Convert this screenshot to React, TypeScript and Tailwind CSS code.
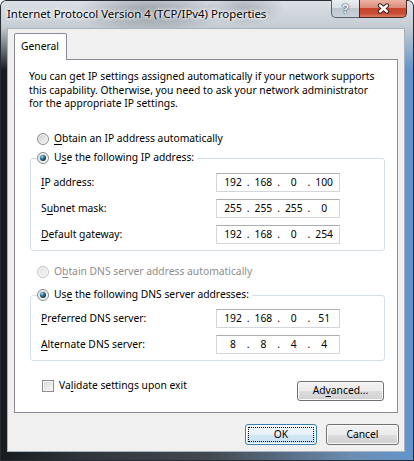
import React from 'react'

function Acc({ children }: { children: React.ReactNode }) {
  return <span className="underline decoration-1 underline-offset-[1.5px]">{children}</span>
}

function Radio({ checked = false, disabled = false }: { checked?: boolean; disabled?: boolean }) {
  const id = React.useId().replace(/:/g, '')
  return (
    <svg width="12" height="12" viewBox="0 0 12 12" className="shrink-0">
      <defs>
        <linearGradient id={`rb${id}`} x1="0" y1="0" x2="1" y2="1">
          <stop offset="0" stopColor={disabled ? '#e2e2e2' : '#c9c9c9'} />
          <stop offset="1" stopColor={disabled ? '#f4f4f4' : '#fbfbfb'} />
        </linearGradient>
        <radialGradient id={`rd${id}`} cx="0.35" cy="0.3" r="0.75">
          <stop offset="0" stopColor="#a9e4f7" />
          <stop offset="0.45" stopColor="#2f6f92" />
          <stop offset="1" stopColor="#10344a" />
        </radialGradient>
      </defs>
      <circle cx="6" cy="6" r="5.5" fill={`url(#rb${id})`} stroke={disabled ? '#c4c4c4' : '#8c8c8c'} />
      <circle cx="6" cy="6" r="4.3" fill="none" stroke={disabled ? '#f7f7f7' : '#f2f2f2'} strokeWidth="0.8" />
      {checked && <circle cx="6" cy="6" r="3" fill={`url(#rd${id})`} />}
    </svg>
  )
}

function IpBox({ parts }: { parts: string[] }) {
  return (
    <div className="flex h-[19px] w-[124px] items-center border border-[#d3d7dd] border-t-[#abadb3] bg-white pl-[4px]">
      {parts.map((p, i) => (
        <React.Fragment key={i}>
          {i > 0 && <span className="w-[6.4px] text-center">.</span>}
          <span className="w-[24px] text-center">{p}</span>
        </React.Fragment>
      ))}
    </div>
  )
}

function Field({ label, parts }: { label: React.ReactNode; parts: string[] }) {
  return (
    <div className="grid h-[19px] grid-cols-[175px_124px] items-center pl-[4px]">
      <span>{label}</span>
      <IpBox parts={parts} />
    </div>
  )
}

function Button({
  children,
  primary = false,
  className = '',
}: {
  children: React.ReactNode
  primary?: boolean
  className?: string
}) {
  return (
    <div
      className={`flex rounded-[3px] border p-[2px] shadow-[inset_0_0_0_1px_#fbfbfb] ${
        primary
          ? 'border-[#3c7fb1] bg-[linear-gradient(180deg,#f1f8fc_0%,#e6f2f9_50%,#d3e8f4_50%,#c6e0ef_100%)]'
          : 'border-[#707070] bg-[linear-gradient(180deg,#f2f2f2_0%,#ebebeb_50%,#dddddd_50%,#cfcfcf_100%)]'
      } ${className}`}
    >
      <div
        className={`flex flex-1 items-center justify-center border ${
          primary ? 'border-dotted border-black' : 'border-transparent'
        }`}
      >
        {children}
      </div>
    </div>
  )
}

export default function App() {
  return (
    <div className="flex h-[461px] w-[414px] flex-col overflow-hidden rounded-t-[6px] bg-[radial-gradient(ellipse_75px_22px_at_150px_12px,rgba(86,94,102,0.5),transparent),radial-gradient(ellipse_40px_18px_at_245px_8px,rgba(96,104,112,0.35),transparent),linear-gradient(180deg,#dbe1e6_0px,#c5ccd3_27px,rgba(197,204,211,0)_70px),linear-gradient(90deg,#171b1f_0%,#2f353b_20%,#41484f_50%,#6c8db2_85%,#6295ce_100%)] font-['Noto_Sans',sans-serif] text-[10.3px] text-black shadow-[inset_0_0_0_1px_#262c32]">
      {/* title bar */}
      <div className="flex h-[28px] shrink-0 items-start">
        <span className="mt-[6px] pl-[7px] text-[11.4px] leading-[16px] [text-shadow:0_0_5px_#fff,0_0_5px_#fff,0_0_3px_#fff]">
          Internet Protocol Version 4 (TCP/IPv4) Properties
        </span>
        <div className="ml-auto mr-[7px] flex h-[18px]">
          <div className="flex w-[28px] items-center justify-center rounded-bl-[5px] border border-t-0 border-r-0 border-[#59616a] bg-[linear-gradient(180deg,#e9eef2_0%,#d8dfe5_45%,#bdc7d0_50%,#c9d2da_100%)] font-['Liberation_Sans',sans-serif] text-[12px] font-bold text-[#f5f7f9] [text-shadow:0_0_1px_#3a4148,0_0_2px_#3a4148]">
            ?
          </div>
          <div className="flex w-[48px] items-center justify-center rounded-br-[5px] border border-t-0 border-[#4a2a23] bg-[linear-gradient(180deg,#ebb3a5_0%,#dd8b78_45%,#c8452c_50%,#c84b33_78%,#dc7c63_100%)]">
            <svg width="13" height="11" viewBox="0 0 13 11">
              <path d="M3 2.5 L10 8.5 M10 2.5 L3 8.5" stroke="#3a211b" strokeWidth="4.4" strokeLinecap="round" />
              <path d="M3 2.5 L10 8.5 M10 2.5 L3 8.5" stroke="#ffffff" strokeWidth="2.4" strokeLinecap="round" />
            </svg>
          </div>
        </div>
      </div>

      {/* client area */}
      <div className="ml-[7px] mr-[9px] flex h-[424px] shrink-0 flex-col border border-[#aab3bc] bg-[#f0f0f0]">
        {/* tab strip */}
        <div className="flex pl-[6px] pt-[4px]">
          <div className="relative z-10 -mb-px flex h-[27px] w-[53px] items-center rounded-t-[2px] border border-b-0 border-[#898c95] bg-white pl-[6px]">
            General
          </div>
        </div>

        {/* tab page */}
        <div className="mx-[6px] flex flex-col border border-[#898c95] bg-white pb-[11px] pl-[15px] pr-[12px] pt-[10px]">
          <p className="-ml-px leading-[13.5px]">
            You can get IP settings assigned automatically if your network supports
            <br />
            this capability. Otherwise, you need to ask your network administrator
            <br />
            for the appropriate IP settings.
          </p>

          <div className="mt-[18.5px] flex h-[19px] items-center gap-[5px] pl-[7px]">
            <Radio />
            <span>
              <Acc>O</Acc>btain an IP address automatically
            </span>
          </div>

          <fieldset className="rounded-[3px] border border-[#d5dfe5] px-[6px] pb-[6px]">
            <legend>
              <span className="flex h-[20px] items-center gap-[5px] pr-[3px]">
                <Radio checked />
                <span>
                  U<Acc>s</Acc>e the following IP address:
                </span>
              </span>
            </legend>
            <div className="mt-[5px] flex flex-col gap-[7px]">
              <Field label={<><Acc>I</Acc>P address:</>} parts={['192', '168', '0', '100']} />
              <Field label={<>S<Acc>u</Acc>bnet mask:</>} parts={['255', '255', '255', '0']} />
              <Field label={<><Acc>D</Acc>efault gateway:</>} parts={['192', '168', '0', '254']} />
            </div>
          </fieldset>

          <div className="mt-[11px] flex h-[20px] items-center gap-[5px] pl-[7px] text-[#8d8d8d]">
            <Radio disabled />
            <span>
              O<Acc>b</Acc>tain DNS server address automatically
            </span>
          </div>

          <fieldset className="mt-[3px] rounded-[3px] border border-[#d5dfe5] px-[6px] pb-[6px]">
            <legend>
              <span className="flex h-[20px] items-center gap-[5px] pr-[3px]">
                <Radio checked />
                <span>
                  Us<Acc>e</Acc> the following DNS server addresses:
                </span>
              </span>
            </legend>
            <div className="mt-[4px] flex flex-col gap-[7px]">
              <Field label={<><Acc>P</Acc>referred DNS server:</>} parts={['192', '168', '0', '51']} />
              <Field label={<><Acc>A</Acc>lternate DNS server:</>} parts={['8', '8', '4', '4']} />
            </div>
          </fieldset>

          <div className="mt-[15px] flex items-start justify-between">
            <div className="flex h-[20px] items-center gap-[5px] pl-[12px]">
              <div className="h-[12px] w-[12px] border border-[#8e8f8f] bg-[linear-gradient(135deg,#d6d6d6,#fbfbfb)] shadow-[inset_0_0_0_1px_#f4f4f4]" />
              <span>
                Va<Acc>l</Acc>idate settings upon exit
              </span>
            </div>
            <Button className="mr-px mt-[5px] h-[20px] w-[87px]">
              <span>
                Ad<Acc>v</Acc>anced...
              </span>
            </Button>
          </div>
        </div>

        {/* dialog buttons */}
        <div className="mt-[11px] flex justify-end gap-[9px] pr-[5px]">
          <Button primary className="h-[21px] w-[72px]">
            OK
          </Button>
          <Button className="h-[21px] w-[73px]">Cancel</Button>
        </div>
      </div>
    </div>
  )
}
